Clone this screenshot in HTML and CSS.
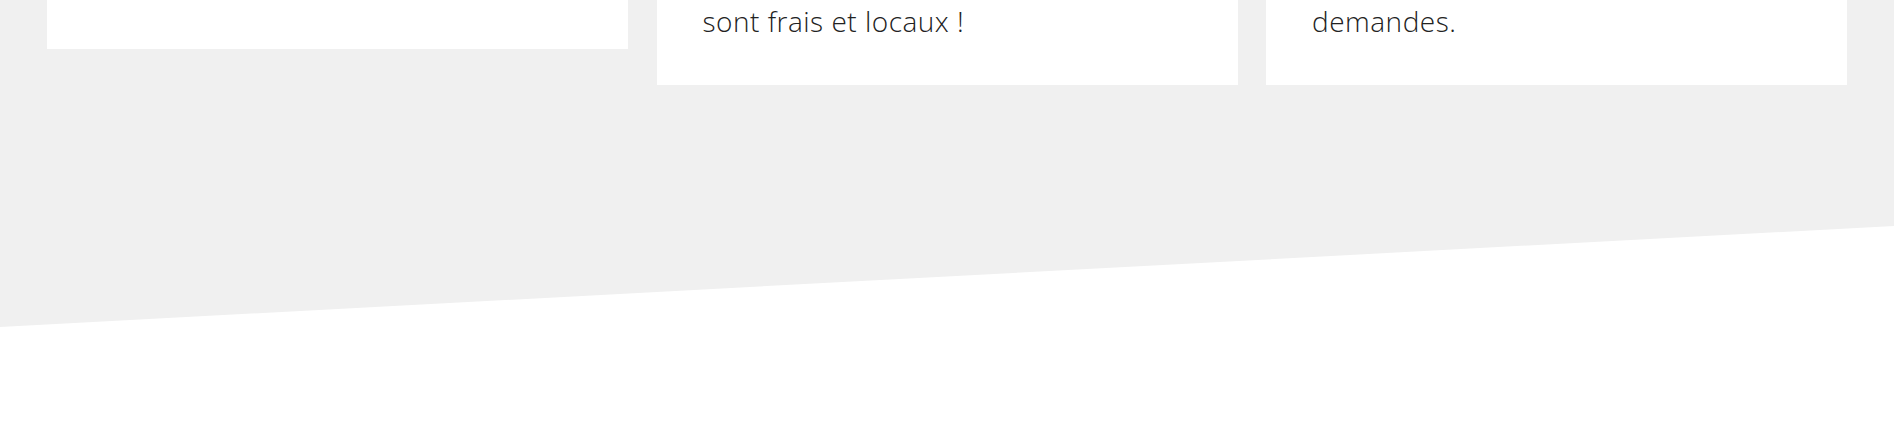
FILE: index.html
```html
<!DOCTYPE html>
<html lang="fr">
<head>
<meta charset="utf-8">
<title>Nos engagements</title>
<link rel="stylesheet" href="styles.css">
</head>
<body>
<section class="features">
  <div class="cards">
    <article class="card"></article>
    <article class="card">
      <p class="card-text">sont frais et locaux !</p>
    </article>
    <article class="card">
      <p class="card-text">demandes.</p>
    </article>
  </div>
</section>
</body>
</html>
```
FILE: styles.css
```css
html, body {
  margin: 0;
  padding: 0;
  background: #ffffff;
}

body {
  font-family: "Open Sans", "Liberation Sans", sans-serif;
  overflow: hidden;
}

.features {
  display: flow-root;
  background: #f0f0f0;
  height: 327px;
  clip-path: polygon(0 0, 100% 0, 100% 226px, 0 100%);
}

.cards {
  display: grid;
  grid-template-columns: repeat(3, 581px);
  column-gap: 28.5px;
  align-items: start;
  padding-left: 47px;
  margin-top: -43px;
}

.card {
  background: #ffffff;
  padding: 46px 46px 46px;
}

.card-text {
  margin: 0;
  font-size: 28px;
  font-weight: 300;
  letter-spacing: 0.5px;
  line-height: 36px;
  color: #222222;
}
```
